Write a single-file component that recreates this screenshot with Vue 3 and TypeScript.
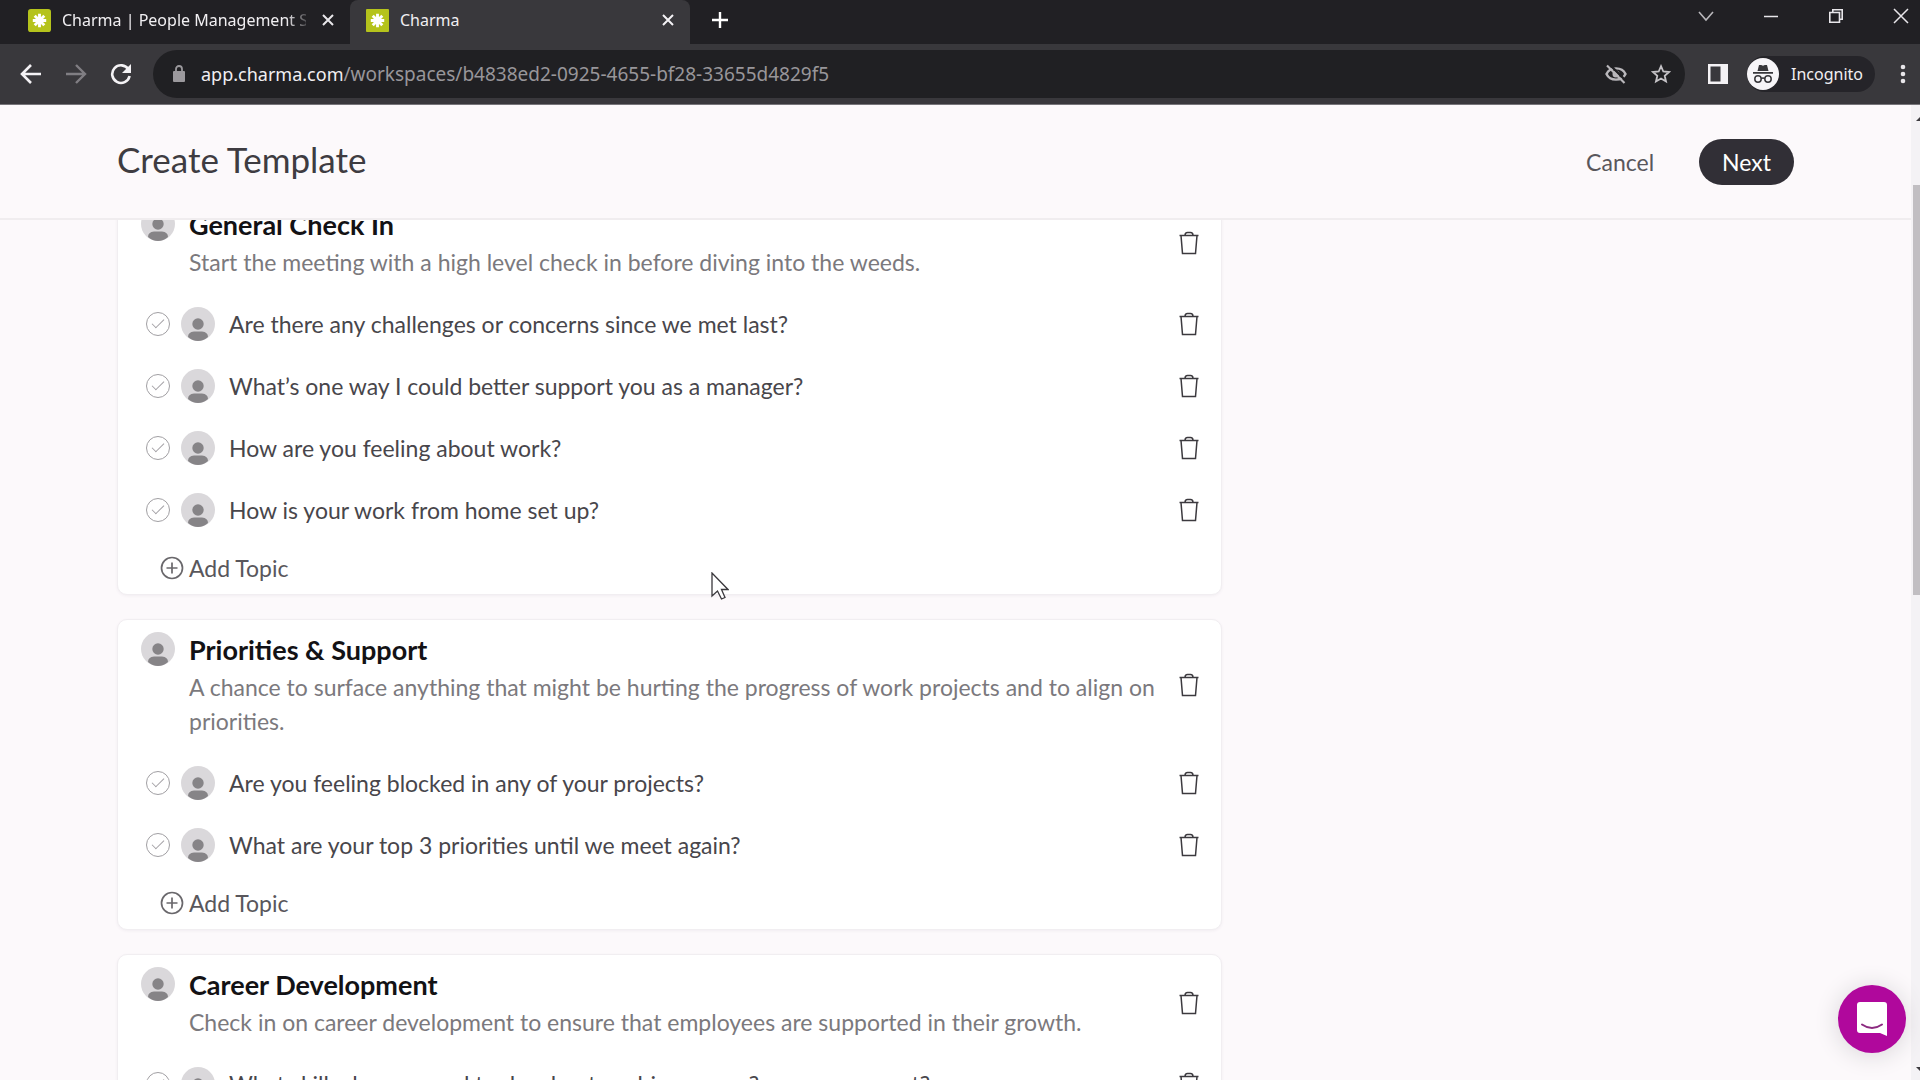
<script setup lang="ts">
import { ref } from 'vue'

interface Topic {
  id: string
  text: string
  done: boolean
}

interface Section {
  id: string
  title: string
  description: string
  topics: Topic[]
}

const path = ref('/workspaces/b4838ed2-0925-4655-bf28-33655d4829f5')

const makeTopics = (prefix: string, texts: string[]): Topic[] =>
  texts.map((text, i) => ({ id: `${prefix}-${i}`, text, done: false }))

const sections = ref<Section[]>([
  {
    id: 'general',
    title: 'General Check In',
    description: 'Start the meeting with a high level check in before diving into the weeds.',
    topics: makeTopics('general', [
      'Are there any challenges or concerns since we met last?',
      'What’s one way I could better support you as a manager?',
      'How are you feeling about work?',
      'How is your work from home set up?',
    ]),
  },
  {
    id: 'priorities',
    title: 'Priorities & Support',
    description:
      'A chance to surface anything that might be hurting the progress of work projects and to align on priorities.',
    topics: makeTopics('priorities', [
      'Are you feeling blocked in any of your projects?',
      'What are your top 3 priorities until we meet again?',
    ]),
  },
  {
    id: 'career',
    title: 'Career Development',
    description: 'Check in on career development to ensure that employees are supported in their growth.',
    topics: makeTopics('career', ['What skills do you need to develop to achieve more? can we support?']),
  },
])

const removeSection = (id: string) => {
  sections.value = sections.value.filter((s) => s.id !== id)
}

const removeTopic = (section: Section, id: string) => {
  section.topics = section.topics.filter((t) => t.id !== id)
}

const addTopic = (section: Section) => {
  section.topics.push({ id: `${section.id}-${Date.now()}`, text: 'New topic', done: false })
}
</script>

<template>
  <div class="window">
    <div class="tabstrip">
      <div class="tab">
        <svg class="favicon" viewBox="0 0 24 24" aria-hidden="true">
          <rect width="24" height="24" rx="3" fill="#b5c31c" />
          <path d="M12 5v14M5 12h14M7 7l10 10M17 7L7 17" stroke="#fff" stroke-width="3" />
        </svg>
        <span class="tab-title fade">Charma | People Management S</span>
        <button class="icon-btn" aria-label="Close tab">
          <svg width="12" height="12" viewBox="0 0 12 12"><path d="M1 1l10 10M11 1L1 11" stroke="#e8e6ea" stroke-width="2" /></svg>
        </button>
      </div>
      <div class="tab active">
        <svg class="favicon" viewBox="0 0 24 24" aria-hidden="true">
          <rect width="24" height="24" rx="1" fill="#b5c31c" />
          <path d="M12 5v14M5 12h14M7 7l10 10M17 7L7 17" stroke="#fff" stroke-width="3" />
        </svg>
        <span class="tab-title">Charma</span>
        <button class="icon-btn" aria-label="Close tab">
          <svg width="12" height="12" viewBox="0 0 12 12"><path d="M1 1l10 10M11 1L1 11" stroke="#f4f2f5" stroke-width="2" /></svg>
        </button>
      </div>
      <button class="icon-btn new-tab" aria-label="New tab">
        <svg width="18" height="18" viewBox="0 0 18 18"><path d="M9 1v16M1 9h16" stroke="#fff" stroke-width="2.4" /></svg>
      </button>
      <div class="window-controls">
        <button class="icon-btn" aria-label="Search tabs">
          <svg width="16" height="16" viewBox="0 0 16 16" fill="none"><path d="M1 4l7 8 7-8" stroke="#b9b7bb" stroke-width="1.6" /></svg>
        </button>
        <button class="icon-btn" aria-label="Minimize">
          <svg width="16" height="16" viewBox="0 0 16 16"><path d="M1 8.500h14" stroke="#e8e6ea" stroke-width="1.500" /></svg>
        </button>
        <button class="icon-btn" aria-label="Restore">
          <svg width="16" height="16" viewBox="0 0 16 16" fill="none" stroke="#e8e6ea" stroke-width="1.6"><path d="M1.800 4.500h9.700v9.700H1.800zM4.800 4.500V1.800h9.400v9.400h-2.700" /></svg>
        </button>
        <button class="icon-btn" aria-label="Close window">
          <svg width="16" height="16" viewBox="0 0 16 16"><path d="M1 1l14 14M15 1L1 15" stroke="#e8e6ea" stroke-width="1.500" /></svg>
        </button>
      </div>
    </div>

    <div class="toolbar">
      <div class="nav">
        <button class="icon-btn" aria-label="Back">
          <svg width="22" height="22" viewBox="0 0 22 22" fill="none" stroke="#f4f2f5" stroke-width="2.600"><path d="M21 11H3M11 2l-9 9 9 9" /></svg>
        </button>
        <button class="icon-btn" aria-label="Forward">
          <svg width="22" height="22" viewBox="0 0 22 22" fill="none" stroke="#807e83" stroke-width="2.400"><path d="M1 11h18M11 2l9 9-9 9" /></svg>
        </button>
        <button class="icon-btn" aria-label="Reload">
          <svg width="22" height="22" viewBox="0 0 22 22" fill="none"><path d="M18.500 6.500A8.800 8.800 0 1 0 19.600 13" stroke="#f4f2f5" stroke-width="2.600" /><path d="M21 1v9h-9z" fill="#f4f2f5" /></svg>
        </button>
      </div>
      <div class="omnibox">
        <svg class="lock" width="12" height="18" viewBox="0 0 12 18" fill="none"><rect y="6" width="12" height="11" rx="1" fill="#9b999d" /><path d="M3 7V4a3 3 0 0 1 6 0v3" stroke="#9b999d" stroke-width="1.800" /></svg>
        <label class="host" for="url-path">app.charma.com</label>
        <input id="url-path" v-model="path" class="path" type="text" spellcheck="false" />
        <button class="icon-btn" aria-label="Third-party cookies blocked">
          <svg width="22" height="20" viewBox="0 0 22 20" fill="none" stroke="#b9b7bb"><path d="M1.500 10C5 2.500 17 2.500 20.500 10 17 17.500 5 17.500 1.500 10z" stroke-width="2.400" /><circle cx="11" cy="10" r="3.500" fill="#b9b7bb" stroke="none" /><path d="M4.500 0.500l17 17" stroke="#202023" stroke-width="2.400" /><path d="M2 1.500l17.500 17.500" stroke-width="2.200" /></svg>
        </button>
        <button class="icon-btn" aria-label="Bookmark this tab">
          <svg width="20" height="20" viewBox="0 0 20 20" fill="none"><path d="M10 2.200l2.300 5.300 5.700.5-4.300 3.800 1.300 5.700-5-3-5 3 1.300-5.700L2 8l5.700-.5z" stroke="#c4c2c6" stroke-width="1.800" /></svg>
        </button>
      </div>
      <button class="icon-btn panel" aria-label="Side panel">
        <svg width="20" height="20" viewBox="0 0 20 20"><path fill="#f4f2f5" fill-rule="evenodd" d="M0 0h20v20H0zM2.500 2.500v15h10v-15z" /></svg>
      </button>
      <button class="incognito">
        <svg width="32" height="32" viewBox="0 0 32 32" aria-hidden="true">
          <circle cx="16" cy="16" r="16" fill="#f7f5f8" />
          <path d="M10.500 13l1.500-6h2.200l1.800.8L17.800 7H20l1.500 6zM6 14h20v1.800H6z" fill="#38373b" />
          <g fill="none" stroke="#38373b" stroke-width="1.500"><circle cx="11" cy="21" r="3.200" /><circle cx="21" cy="21" r="3.200" /><path d="M14 20.500q2-1 4 0" /></g>
        </svg>
        <span>Incognito</span>
      </button>
      <button class="icon-btn kebab" aria-label="Menu">
        <svg width="6" height="20" viewBox="0 0 6 20" fill="#e8e6ea"><circle cx="3" cy="3" r="2.300" /><circle cx="3" cy="10" r="2.300" /><circle cx="3" cy="17" r="2.300" /></svg>
      </button>
    </div>

    <div class="viewport">
      <div class="page">
        <header class="page-header">
          <h1>Create Template</h1>
          <div class="actions">
            <button class="cancel">Cancel</button>
            <button class="next">Next</button>
          </div>
        </header>

        <main class="content">
          <div class="sections">
            <section v-for="section in sections" :key="section.id" class="card">
              <div class="card-head">
                <svg class="avatar" viewBox="0 0 34 34" aria-hidden="true">
                  <circle cx="17" cy="17" r="17" fill="#dad8db" />
                  <circle cx="17" cy="17" r="5.700" fill="#868487" />
                  <path d="M7 30q0-5 6-5.500h8q6 .5 6 5.500-4.500 4-10 4T7 30z" fill="#868487" />
                </svg>
                <div class="card-text">
                  <h2>{{ section.title }}</h2>
                  <p>{{ section.description }}</p>
                </div>
                <button class="trash" :aria-label="`Delete ${section.title}`" @click="removeSection(section.id)">
                  <svg width="20" height="24" viewBox="0 0 20 24" fill="none" stroke="#3c3a3f" stroke-width="1.500"><path d="M.5 4.500h19M2 4.500l1.500 18h13l1.500-18M6 4.500q0-3 2.500-3h3q2.500 0 2.500 3" /></svg>
                </button>
              </div>
              <ul class="topics">
                <li v-for="topic in section.topics" :key="topic.id" class="topic">
                  <input :id="topic.id" v-model="topic.done" class="check" type="checkbox" />
                  <svg class="avatar" viewBox="0 0 34 34" aria-hidden="true">
                    <circle cx="17" cy="17" r="17" fill="#dad8db" />
                    <circle cx="17" cy="17" r="5.700" fill="#868487" />
                    <path d="M7 30q0-5 6-5.500h8q6 .5 6 5.500-4.500 4-10 4T7 30z" fill="#868487" />
                  </svg>
                  <label :for="topic.id">{{ topic.text }}</label>
                  <button class="trash" aria-label="Delete topic" @click="removeTopic(section, topic.id)">
                    <svg width="20" height="24" viewBox="0 0 20 24" fill="none" stroke="#3c3a3f" stroke-width="1.500"><path d="M.5 4.500h19M2 4.500l1.500 18h13l1.500-18M6 4.500q0-3 2.500-3h3q2.500 0 2.500 3" /></svg>
                  </button>
                </li>
              </ul>
              <button class="add-topic" @click="addTopic(section)">
                <svg width="24" height="24" viewBox="0 0 24 24" fill="none" stroke="#6a686c" stroke-width="1.700"><circle cx="12" cy="12" r="10.500" /><path d="M12 6.500v11M6.500 12h11" /></svg>
                <span>Add Topic</span>
              </button>
            </section>
          </div>
        </main>
      </div>

      <div class="scrollbar" aria-hidden="true">
        <span class="arrow up"></span>
        <span class="thumb"></span>
        <span class="arrow down"></span>
      </div>

      <button class="chat" aria-label="Open chat">
        <svg width="32" height="36" viewBox="0 0 32 36"><path d="M4 1h24q3 0 3 3v31l-7-3H4q-3 0-3-3V4q0-3 3-3z" fill="#fff" /><path d="M6 23.500q10 7 20 0" fill="none" stroke="#8c2b80" stroke-width="2" stroke-linecap="round" /></svg>
      </button>
    </div>

    <svg class="cursor" width="18" height="29" viewBox="0 0 18 29" aria-hidden="true"><path d="M1 1v23l5.500-5 4 8 3.500-1.500-3.500-8H17z" fill="#fff" stroke="#3a383c" stroke-width="1.300" /></svg>
  </div>
</template>

<style>
body {
  margin: 0;
}
</style>

<style scoped>
.window {
  position: relative;
  display: flex;
  flex-direction: column;
  height: 100vh;
  overflow: hidden;
  background: #fcf9fb;
  color: #48464b;
  font-family: Lato, 'Open Sans', sans-serif;
  font-size: 23px;
}

button {
  margin: 0;
  padding: 0;
  border: 0;
  background: none;
  color: inherit;
  font: inherit;
  cursor: pointer;
}

h1,
h2,
p,
ul {
  margin: 0;
  padding: 0;
}

svg {
  display: block;
  flex: none;
}

.icon-btn {
  display: flex;
  flex: none;
}

.tabstrip {
  display: flex;
  flex: none;
  height: 44px;
  background: #212024;
  color: #f1eff2;
  font-family: 'Noto Sans', 'Open Sans', sans-serif;
  font-size: 16px;
}

.tab {
  display: flex;
  align-items: center;
  box-sizing: border-box;
  width: 340px;
  padding: 0 16px;
  padding-bottom: 4px;
}

.tab:first-child {
  width: 350px;
  padding-left: 28px;
}

.tab.active {
  border-radius: 8px 8px 0 0;
  background: #39383c;
}

.favicon {
  width: 23px;
  height: 23px;
}

.tab-title {
  flex: 1;
  margin: 0 16px 0 11px;
  overflow: hidden;
  white-space: nowrap;
}

.tab-title.fade {
  mask-image: linear-gradient(90deg, #000 224px, transparent 250px);
}

.new-tab {
  align-self: center;
  margin-left: 21px;
  padding-bottom: 4px;
}

.window-controls {
  display: flex;
  gap: 49px;
  margin-left: auto;
  padding: 8px 11px 0 0;
}

.toolbar {
  display: flex;
  flex: none;
  align-items: center;
  height: 60px;
  border-bottom: 1px solid #77757a;
  background: #39383c;
  color: #f1eff2;
  font-family: 'Noto Sans', 'Open Sans', sans-serif;
  font-size: 16px;
}

.nav {
  display: flex;
  gap: 23px;
  margin: 0 21px 0 20px;
}

.omnibox {
  display: flex;
  flex: 1;
  align-items: center;
  height: 48px;
  padding: 0 14px 0 20px;
  border-radius: 24px;
  background: #202023;
}

.host {
  margin-left: 16px;
  font-size: 18px;
}

.path {
  flex: 1;
  min-width: 0;
  padding: 0;
  border: 0;
  outline: 0;
  background: none;
  color: #98969a;
  font: inherit;
  font-size: 19px;
}

.omnibox .icon-btn {
  margin-left: 24px;
}

.panel {
  margin: 0 19px 0 23px;
}

.incognito {
  display: flex;
  gap: 12px;
  align-items: center;
  height: 36px;
  padding-right: 12px;
  border-radius: 18px;
  background: #252429;
}

.kebab {
  margin: 0 14px 0 25px;
}

.viewport {
  position: relative;
  display: flex;
  flex: 1;
  min-height: 0;
}

.page {
  flex: 1;
  min-width: 0;
  overflow: hidden;
}

.page-header {
  position: relative;
  z-index: 1;
  display: flex;
  align-items: center;
  justify-content: space-between;
  box-sizing: border-box;
  height: 115px;
  padding: 0 117px;
  border-bottom: 2px solid #f0edef;
  background: #fcf9fb;
}

h1 {
  padding-bottom: 6px;
  color: #3e3c41;
  font-size: 35px;
  font-weight: 400;
  line-height: 48px;
}

.actions {
  display: flex;
  gap: 45px;
  align-items: center;
}

.cancel {
  color: #59575c;
}

.next {
  height: 46px;
  padding: 0 23px;
  border-radius: 23px;
  background: #312f36;
  color: #fff;
}

/* The list is scrolled so its first card starts beneath the header. */
.content {
  display: grid;
  grid-template-columns: 2fr 1fr;
  gap: 20px;
  margin-top: -26px;
  padding: 0 117px;
}

.sections {
  display: flex;
  flex-direction: column;
  gap: 24px;
}

.card {
  padding: 12px 22px 0 23px;
  border: 1px solid #f1eef1;
  border-radius: 10px;
  background: #fff;
  box-shadow: 0 1px 3px #f1edf1;
}

.card-head {
  display: flex;
  align-items: center;
}

.avatar {
  width: 34px;
  height: 34px;
}

.card-head .avatar {
  align-self: flex-start;
}

.card-text {
  flex: 1;
  margin-left: 14px;
}

h2 {
  padding-bottom: 2px;
  color: #131215;
  font-size: 27px;
  font-weight: 700;
  line-height: 36px;
}

p {
  color: #7b797d;
  line-height: 34px;
}

.trash {
  display: flex;
  flex: none;
  margin-left: 10px;
}

.topics {
  padding-top: 14px;
  list-style: none;
}

.topic {
  display: flex;
  align-items: center;
  height: 62px;
}

.topic label {
  flex: 1;
  margin-left: 14px;
}

.check {
  display: flex;
  flex: none;
  align-items: center;
  justify-content: center;
  box-sizing: border-box;
  width: 24px;
  height: 24px;
  margin: 0 11px 0 5px;
  border: 1px solid #a19fa3;
  border-radius: 50%;
  appearance: none;
}

.check::after {
  width: 5px;
  height: 11px;
  margin-bottom: 4px;
  border: solid #a19fa3;
  border-width: 0 1px 1px 0;
  content: '';
  transform: rotate(45deg);
}

.check:checked {
  background: #e9e7ea;
}

.add-topic {
  display: flex;
  gap: 5px;
  align-items: center;
  height: 53px;
  padding-left: 19px;
  color: #59575c;
}

.scrollbar {
  position: relative;
  display: flex;
  flex: none;
  flex-direction: column;
  width: 9px;
  overflow: hidden;
  background: #f4f2f5;
}

.thumb {
  height: 42%;
  margin-left: 2px;
  background: #c1bec2;
}

.arrow {
  height: 0;
  margin-left: 5px;
  border: 5px solid transparent;
}

.up {
  margin-top: 11px;
  margin-bottom: 64px;
  border-top: 0;
  border-bottom-color: #3c3a3f;
}

.down {
  margin-top: auto;
  margin-bottom: 8px;
  border-bottom: 0;
  border-top-color: #3c3a3f;
}

.chat {
  position: absolute;
  right: 14px;
  bottom: 27px;
  display: flex;
  align-items: center;
  justify-content: center;
  width: 68px;
  height: 68px;
  border-radius: 50%;
  background: #b0089c;
  box-shadow: 0 2px 24px #d8d4d8;
}

.cursor {
  position: absolute;
  top: 572px;
  left: 711px;
}
</style>
